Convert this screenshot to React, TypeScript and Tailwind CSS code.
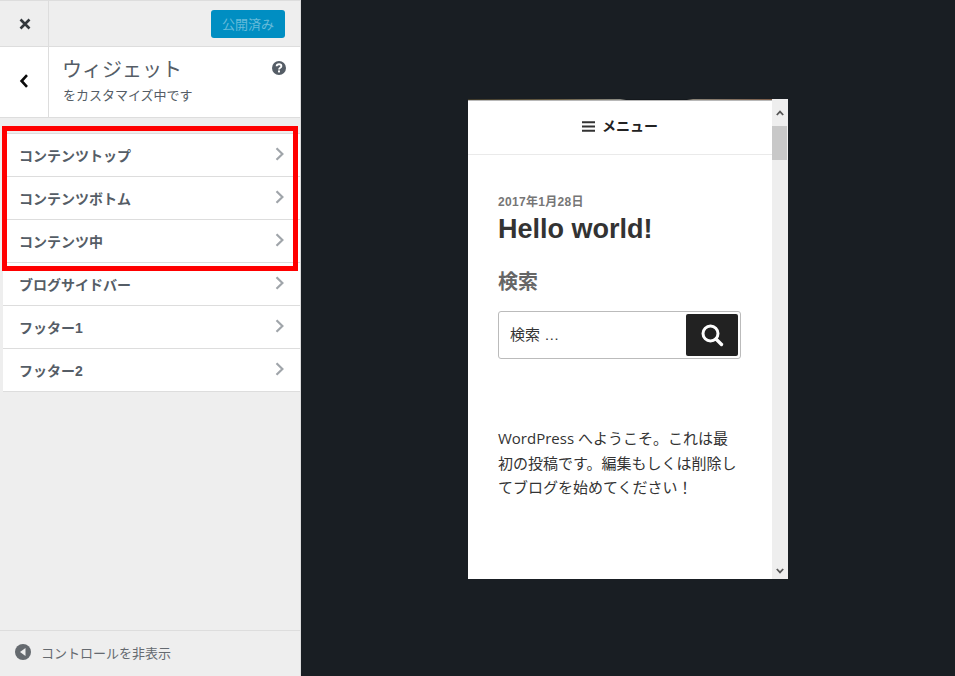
const items = ["コンテンツトップ", "コンテンツボトム", "コンテンツ中", "ブログサイドバー", "フッター1", "フッター2"]

function Chevron() {
  return (
    <svg width="10" height="14" viewBox="0 0 10 14" className="-mt-[2px] shrink-0">
      <path d="M1.5 1.2 L7.4 7 L1.5 12.8" fill="none" stroke="#a0a5aa" strokeWidth="2.2" />
    </svg>
  )
}

export default function App() {
  return (
    <div className="flex h-[676px] w-[955px] overflow-hidden bg-[#191e23] [font-family:'Liberation_Sans','Noto_Sans_CJK_JP',sans-serif]">
      {/* Sidebar */}
      <aside className="relative flex h-full w-[301px] shrink-0 flex-col border-t border-r border-[#ddd] bg-[#eee]">
        <div className="flex h-[46px] shrink-0 border-b border-[#ddd]">
          <div className="flex w-[49px] items-center justify-center border-r border-[#ddd]">
            <svg width="12" height="12" viewBox="0 0 12 12" className="ml-px">
              <path d="M1.5 1.5 L10.5 10.5 M10.5 1.5 L1.5 10.5" stroke="#32373c" strokeWidth="2.6" />
            </svg>
          </div>
          <div className="flex flex-1 items-start justify-end pr-[15px] pt-[9px]">
            <button className="flex h-[28px] w-[74px] items-center justify-center rounded-[3px] bg-[#008ec2] pt-px text-[13px] text-[#66bbda]">
              公開済み
            </button>
          </div>
        </div>

        <div className="flex h-[71px] shrink-0 border-b border-[#ddd] bg-white">
          <div className="flex w-[49px] items-center justify-center border-r border-[#ddd]">
            <svg width="10" height="14" viewBox="0 0 10 14" className="-mt-[2px]">
              <path d="M8 1.2 L2.6 7 L8 12.8" fill="none" stroke="#0a0a0a" strokeWidth="2.6" />
            </svg>
          </div>
          <div className="relative flex-1 pl-[14px] pt-[9px]">
            <div className="-ml-px text-[20px] leading-[28px] text-[#555d66]">ウィジェット</div>
            <div className="text-[13px] leading-[24px] text-[#555d66]">をカスタマイズ中です</div>
            <svg width="16" height="16" viewBox="0 0 16 16" className="absolute right-[13px] top-[13px]">
              <circle cx="8" cy="8" r="7" fill="#555d66" />
              <path d="M5.6 6.2 C5.8 3.6 10.4 3.6 10.4 6.2 C10.4 7.8 8 7.6 8 9.4" fill="none" stroke="#fff" strokeWidth="1.8" />
              <rect x="7" y="10.4" width="2" height="2" fill="#fff" />
            </svg>
          </div>
        </div>

        <ul className="mt-[15px] ml-[3px] border-t border-[#ddd]">
          {items.map((label) => (
            <li key={label} className="flex h-[43px] items-center justify-between border-b border-[#ddd] bg-white pl-[16px] pr-[15px]">
              <span className="pt-[2px] text-[14px] font-bold text-[#555d66]">{label}</span>
              <Chevron />
            </li>
          ))}
        </ul>

        <div className="mt-auto flex h-[46px] shrink-0 items-center border-t border-[#ddd] pl-[15px]">
          <svg width="16" height="16" viewBox="0 0 16 16" className="mr-[10px] -mt-[3px]">
            <circle cx="8" cy="8" r="8" fill="#656a6f" />
            <path d="M10.5 4 V12 L5 8 Z" fill="#eee" />
          </svg>
          <span className="text-[13px] text-[#656a70]">コントロールを非表示</span>
        </div>

        {/* Red highlight */}
        <div className="absolute left-[2px] top-[125px] h-[145px] w-[296px] border-[5px] border-[#ff0000]" />
      </aside>

      {/* Preview */}
      <main className="flex flex-1 items-start justify-center pt-[99px]">
        <div className="flex h-[480px] w-[320px] overflow-hidden bg-white">
          <div className="min-w-0 flex-1">
            <div className="h-px bg-[linear-gradient(90deg,#3a3628_0%,#6b5f45_30%,#8c8c84_50%,#14181c_52%,#14181c_72%,#8a8478_74%,#7a5c48_100%)]" />
            <div className="h-px bg-[#b8b8b8]" />
            <div className="flex h-[54px] items-center justify-center gap-[7px] border-b border-[#eaeaea] pb-[2px] text-[14px] font-bold text-[#222]">
              <svg width="13" height="11" viewBox="0 0 13 11">
                <path d="M0 1.2 H13 M0 5.5 H13 M0 9.8 H13" stroke="#333" strokeWidth="2" />
              </svg>
              メニュー
            </div>
            <div className="px-[30px] pt-[38px]">
              <div className="text-[12px] font-bold leading-[18px] tracking-[0.3px] text-[#767676]">2017年1月28日</div>
              <h1 className="mt-px text-[27px] font-bold leading-[34px] text-[#333]">Hello world!</h1>
              <h2 className="mt-[22px] text-[20px] font-bold leading-[28px] text-[#666]">検索</h2>
              <div className="mt-[15px] flex h-[48px] w-[243px] items-center justify-between rounded-[3px] border border-[#bbb] pl-[11px] pr-[2px]">
                <span className="text-[15px] text-[#333]">検索 …</span>
                <div className="flex h-[42px] w-[52px] items-center justify-center rounded-[2px] bg-[#222]">
                  <svg width="24" height="24" viewBox="0 0 24 24">
                    <circle cx="10.5" cy="10.5" r="7.5" fill="none" stroke="#fff" strokeWidth="3" />
                    <path d="M16 16 L21.5 21.5" stroke="#fff" strokeWidth="3.4" strokeLinecap="round" />
                  </svg>
                </div>
              </div>
              <p className="mt-[67px] w-[243px] font-['Open_Sans','Noto_Sans_CJK_JP',sans-serif] text-[15px] leading-[24.5px] text-[#333]">
                WordPress へようこそ。これは最初の投稿です。編集もしくは削除してブログを始めてください！
              </p>
            </div>
          </div>

          {/* Scrollbar */}
          <div className="flex w-[16px] shrink-0 flex-col bg-[#eee]">
            <div className="flex h-[27px] items-center justify-center">
              <svg width="8" height="6" viewBox="0 0 8 6">
                <path d="M0.8 5 L4 1.6 L7.2 5" fill="none" stroke="#555" strokeWidth="1.8" />
              </svg>
            </div>
            <div className="h-[34px] w-[15px] bg-[#c8c8c8]" />
            <div className="mt-auto flex h-[16px] items-center justify-center">
              <svg width="8" height="6" viewBox="0 0 8 6">
                <path d="M0.8 1 L4 4.4 L7.2 1" fill="none" stroke="#555" strokeWidth="1.8" />
              </svg>
            </div>
          </div>
        </div>
      </main>
    </div>
  )
}
